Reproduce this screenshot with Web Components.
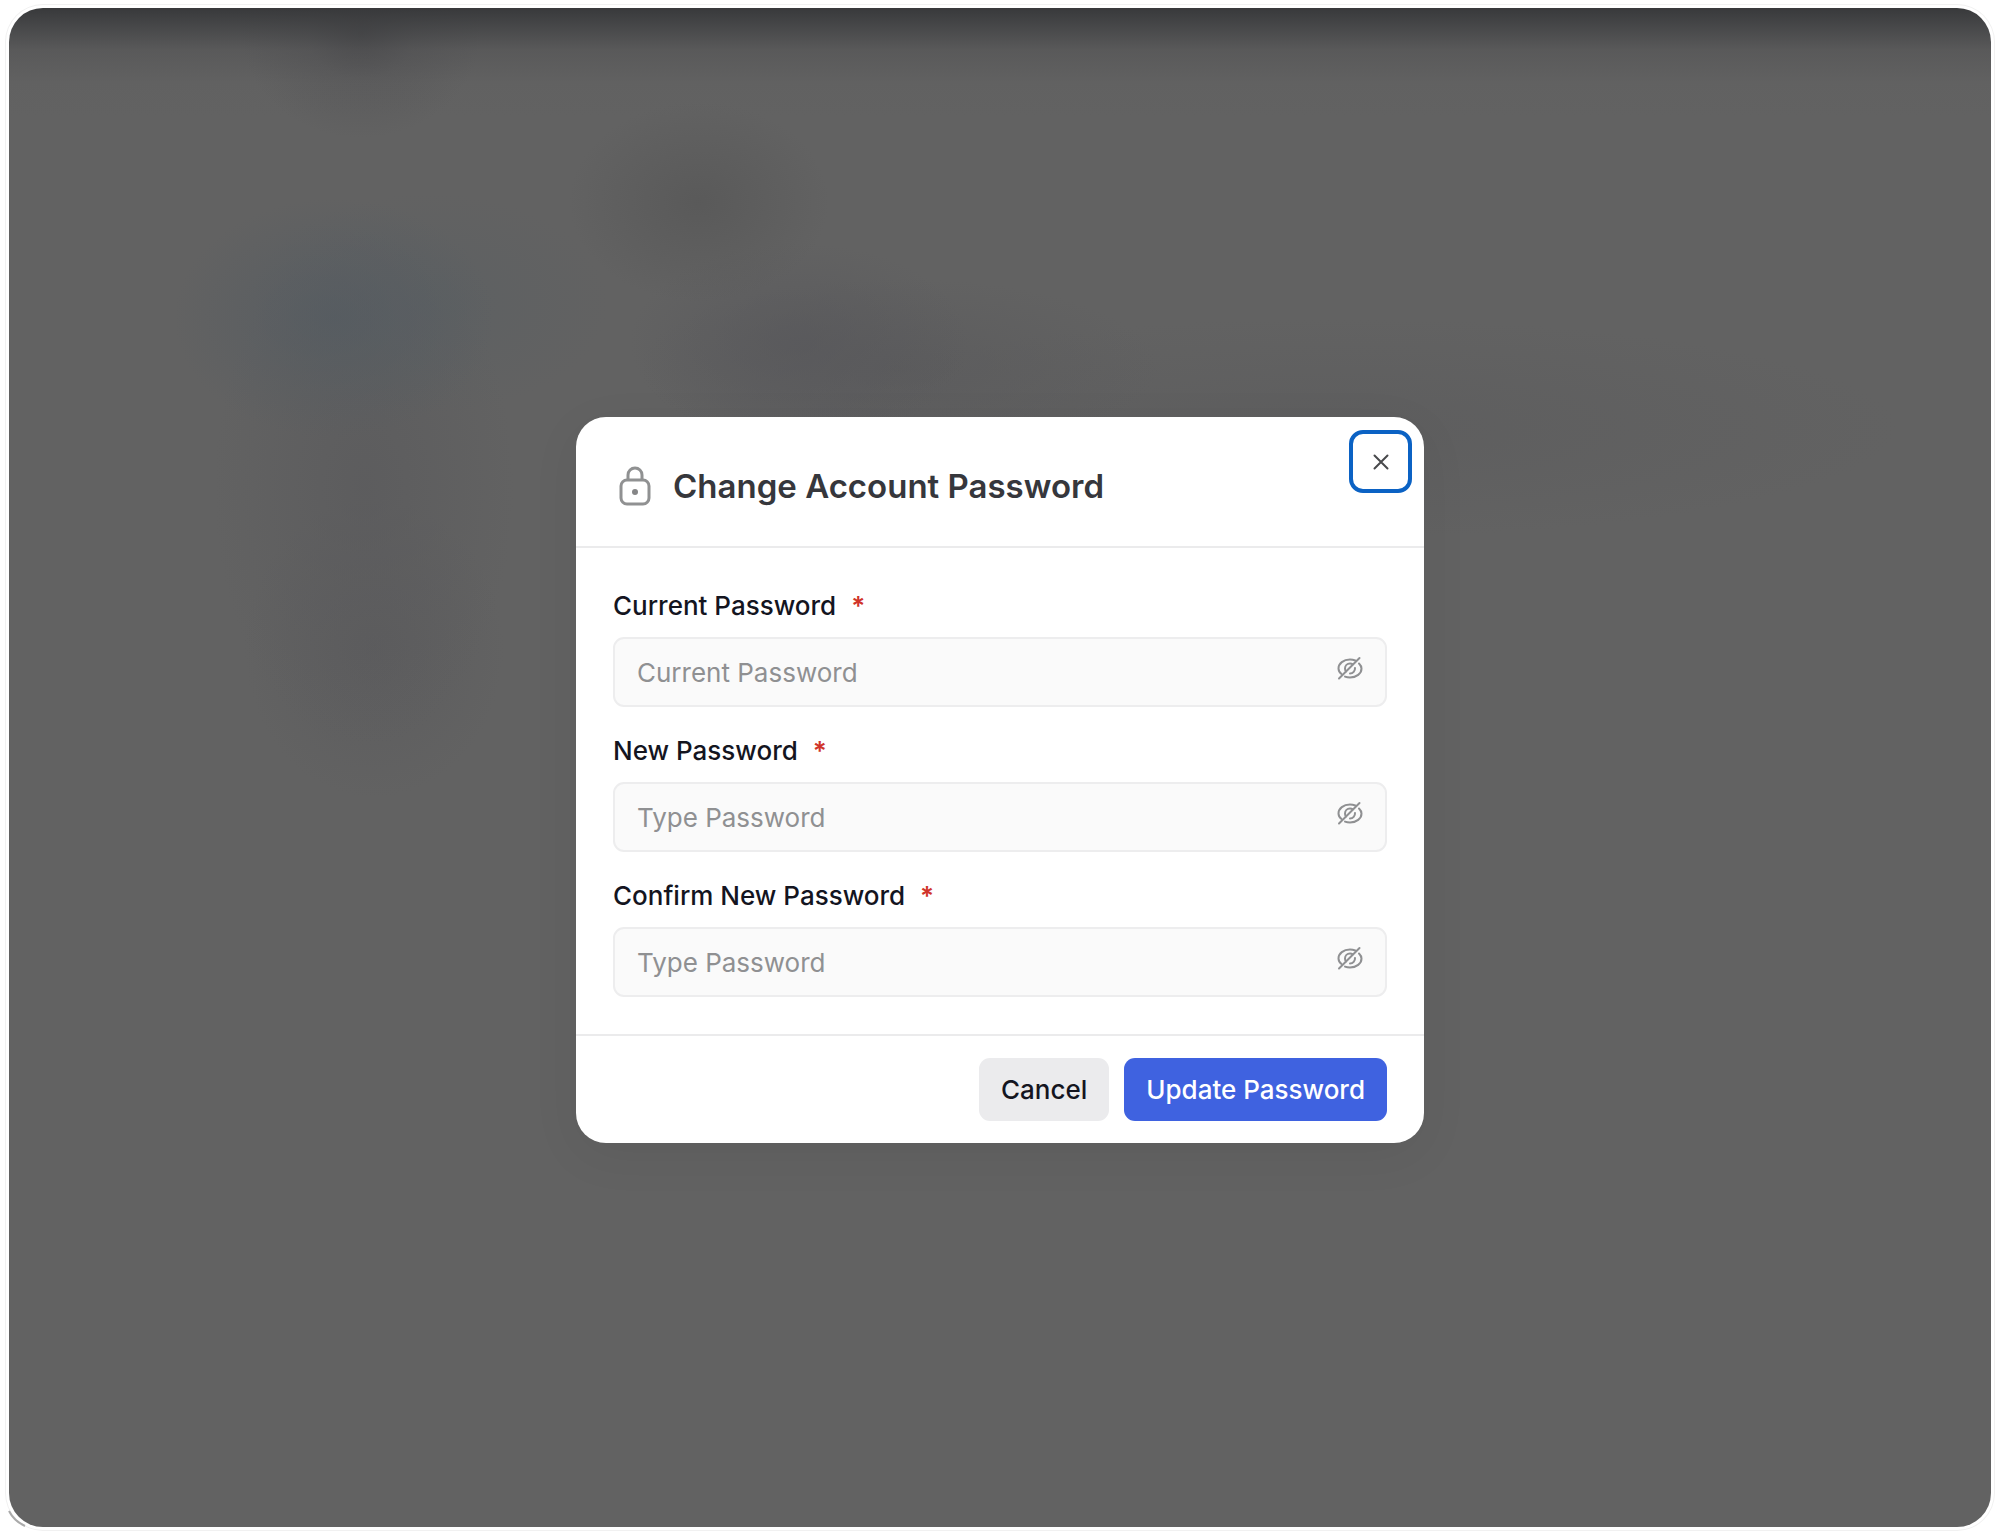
<!DOCTYPE html>
<html lang="en">
<head>
<meta charset="utf-8">
<meta name="viewport" content="width=device-width, initial-scale=1">
<title>Change Account Password</title>
<style>
    body {
        margin: 0;
        background: #fff;
        font-family: Inter, "Liberation Sans", sans-serif;
        color: #14151f;
    }
</style>
</head>
<body>
<modal-backdrop>
    <modal-dialog heading="Change Account Password">
        <password-field name="current" label="Current Password" placeholder="Current Password"></password-field>
        <password-field name="new" label="New Password" placeholder="Type Password"></password-field>
        <password-field name="confirm" label="Confirm New Password" placeholder="Type Password"></password-field>
        <action-button slot="actions">Cancel</action-button>
        <action-button slot="actions" kind="primary">Update Password</action-button>
    </modal-dialog>
</modal-backdrop>

<script>
class ModalBackdrop extends HTMLElement {
    constructor() {
        super();
        this.attachShadow({mode: 'open'});
    }

    connectedCallback() {
        this.shadowRoot.innerHTML = `
            <style>
                :host {
                    display: flex;
                    box-sizing: border-box;
                    min-height: 100vh;
                    padding: 8px 8px 9px 9px;
                    position: relative;
                }
                #surface {
                    flex: 1;
                    display: flex;
                    align-items: center;
                    justify-content: center;
                    padding-top: 25px;
                    border-radius: 34px;
                    box-shadow: 0 0 0 3px #fff, 0 0 0 4px #f1f1f1;
                    /* blurred page behind the dialog */
                    background:
                        linear-gradient(#38393b 0, rgba(60,61,63,0.72) 18px, rgba(72,72,74,0.34) 42px, rgba(90,90,90,0.1) 75px, transparent 110px),
                        radial-gradient(120px 105px at 352px 25px, rgba(66,66,69,0.6), rgba(76,76,79,0.3) 45%, rgba(98,98,98,0)),
                        radial-gradient(130px 100px at 690px 194px, rgba(84,84,84,0.6), rgba(98,98,98,0)),
                        radial-gradient(170px 100px at 790px 335px, rgba(86,86,90,0.6), rgba(98,98,98,0)),
                        radial-gradient(260px 90px at 890px 360px, rgba(88,88,90,0.6), rgba(98,98,98,0)),
                        radial-gradient(160px 120px at 325px 310px, rgba(84,91,97,0.75), rgba(98,98,98,0)),
                        radial-gradient(180px 110px at 420px 295px, rgba(90,95,98,0.6), rgba(98,98,98,0)),
                        radial-gradient(150px 260px at 355px 480px, rgba(90,90,92,0.7), rgba(98,98,98,0)),
                        radial-gradient(130px 150px at 365px 640px, rgba(90,90,92,0.7), rgba(98,98,98,0)),
                        radial-gradient(560px 110px at 1330px 420px, rgba(92,92,93,0.7), rgba(98,98,98,0)),
                        #626262;
                }
                #corner {
                    position: absolute;
                    left: 8px;
                    bottom: 8px;
                }
            </style>
            <div id="surface"><slot></slot></div>
            <svg id="corner" width="20" height="20" fill="none" stroke="#aaa" stroke-width="2" aria-hidden="true">
                <path d="M1 3Q6 13 17 18"/>
            </svg>
        `;
    }
}

class ModalDialog extends HTMLElement {
    constructor() {
        super();
        this.attachShadow({mode: 'open'});
    }

    connectedCallback() {
        this.shadowRoot.innerHTML = `
            <style>
                :host {
                    display: block;
                    width: 100%;
                    max-width: 848px;
                    position: relative;
                    background: #fff;
                    border-radius: 30px;
                    box-shadow: 0 12px 50px rgba(0,0,0,0.06);
                }
                header {
                    display: flex;
                    align-items: center;
                    gap: 21px;
                    padding: 45px 42px 36px;
                    border-bottom: 2px solid #ebebec;
                }
                h2 {
                    margin: 0;
                    font-size: 33px;
                    line-height: 48px;
                    font-weight: 600;
                    color: #36373c;
                }
                #close {
                    position: absolute;
                    top: 13px;
                    right: 12px;
                    width: 63px;
                    height: 63px;
                    padding: 0;
                    display: flex;
                    align-items: center;
                    justify-content: center;
                    background: #fff;
                    border: 4px solid #0b62c4;
                    border-radius: 14px;
                    outline: none;
                }
                #fields {
                    display: flex;
                    flex-direction: column;
                    gap: 28px;
                    padding: 42px 37px 37px;
                }
                footer {
                    display: flex;
                    justify-content: flex-end;
                    gap: 15px;
                    padding: 22px 37px;
                    border-top: 2px solid #ebebec;
                }
            </style>
            <form role="dialog" aria-labelledby="title">
                <header>
                    <svg width="34" height="40" viewBox="0 0 34 40" fill="none" stroke="#909192" stroke-width="3" aria-hidden="true">
                        <rect x="3" y="14" width="28" height="24" rx="6"/>
                        <path d="M10 14V9a7 7 0 0 1 14 0v5"/>
                        <circle cx="17" cy="26" r="3" fill="#858687" stroke="none"/>
                    </svg>
                    <h2 id="title">${this.getAttribute('heading')}</h2>
                </header>
                <div id="fields"><slot></slot></div>
                <footer><slot name="actions"></slot></footer>
                <button id="close" type="button" aria-label="Close">
                    <svg width="16" height="16" viewBox="0 0 16 16" fill="none" stroke="#48494b" stroke-width="2" stroke-linecap="round">
                        <path d="M1.500 1.500l13 13M14.500 1.500l-13 13"/>
                    </svg>
                </button>
            </form>
        `;
        this.shadowRoot.getElementById('close').addEventListener('click', () => this.remove());
    }
}

class PasswordField extends HTMLElement {
    constructor() {
        super();
        this.attachShadow({mode: 'open'});
    }

    connectedCallback() {
        this.shadowRoot.innerHTML = `
            <style>
                :host {
                    display: block;
                }
                label {
                    display: flex;
                    gap: 15px;
                    margin-bottom: 15px;
                    font-size: 26px;
                    line-height: 32px;
                    font-weight: 500;
                }
                #star {
                    color: #d0342a;
                    font-weight: 600;
                }
                #box {
                    display: flex;
                    align-items: flex-start;
                    box-sizing: border-box;
                    height: 70px;
                    padding: 0 21px 0 22px;
                    background: #fafafa;
                    border: 2px solid #ededee;
                    border-radius: 11px;
                }
                input {
                    flex: 1;
                    min-width: 0;
                    height: 66px;
                    padding: 0;
                    border: 0;
                    outline: 0;
                    background: none;
                    font: inherit;
                    font-size: 26px;
                    color: inherit;
                }
                input::placeholder {
                    color: #8f9092;
                    opacity: 1;
                }
                button {
                    margin: 16px 0 0;
                    padding: 0;
                    border: 0;
                    background: none;
                    display: flex;
                }
            </style>
            <label for="input">${this.getAttribute('label')}<span id="star">*</span></label>
            <div id="box">
                <input id="input" type="password" name="${this.getAttribute('name')}" placeholder="${this.getAttribute('placeholder')}" autocomplete="off" required>
                <button type="button" aria-label="Show password">
                    <svg width="28" height="26" viewBox="0 0 28 26" fill="none" stroke="#8f9092" stroke-width="2" stroke-linecap="round">
                        <path d="M5.500 19C3.500 17.500 2.500 15.500 2.500 13.500c0-5 5-9 11.500-9 2 0 3.800.4 5.300 1M23 8.500c1.500 1.500 2.500 3.200 2.500 5 0 5-5 9-11.500 9-1.800 0-3.500-.3-5-.9"/>
                        <path d="M10 16.500c-.8-1-1-2-1-3 0-2.800 2.200-5 5-5 1 0 2 .3 2.800.8M19 13c.2 3-2 5.500-5 5.500"/>
                        <path d="M3 23.500L23.500 3"/>
                    </svg>
                </button>
            </div>
        `;

        const input = this.shadowRoot.getElementById('input');
        this.shadowRoot.querySelector('button').addEventListener('click', () => {
            input.type = input.type === 'password' ? 'text' : 'password';
        });
    }
}

class ActionButton extends HTMLElement {
    constructor() {
        super();
        this.attachShadow({mode: 'open'});
    }

    connectedCallback() {
        const primary = this.getAttribute('kind') === 'primary';
        this.shadowRoot.innerHTML = `
            <style>
                :host {
                    display: block;
                }
                button {
                    height: 63px;
                    padding: 0 22px;
                    border: 0;
                    border-radius: 11px;
                    font: inherit;
                    font-size: 26px;
                    font-weight: 500;
                    background: ${primary ? '#3f62e0' : '#ebebed'};
                    color: ${primary ? '#fff' : '#14151f'};
                }
            </style>
            <button type="button"><slot></slot></button>
        `;
    }
}

customElements.define('modal-backdrop', ModalBackdrop);
customElements.define('modal-dialog', ModalDialog);
customElements.define('password-field', PasswordField);
customElements.define('action-button', ActionButton);
</script>
</body>
</html>
